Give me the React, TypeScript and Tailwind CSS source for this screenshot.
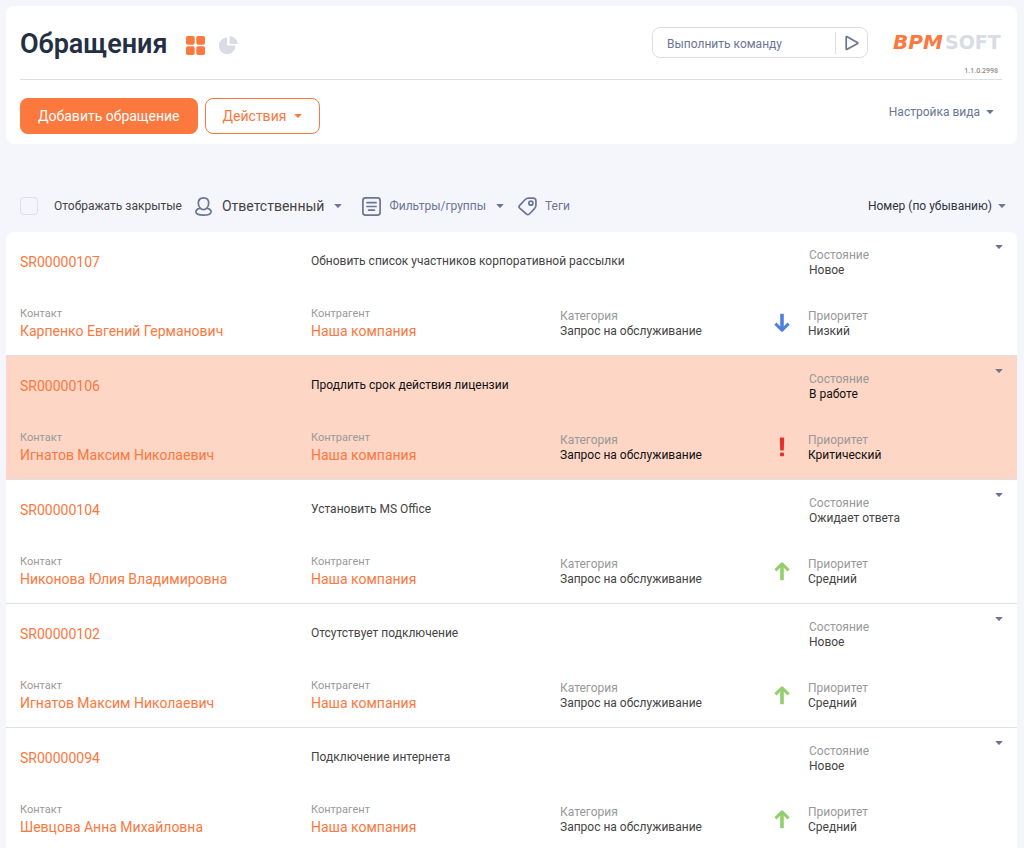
import clsx from "clsx";

type Priority = "low" | "medium" | "critical";

type Ticket = {
  id: string;
  subject: string;
  status: string;
  contact: string;
  priority: Priority;
  selected?: boolean;
};

const tickets: Ticket[] = [
  {
    id: "SR00000107",
    subject: "Обновить список участников корпоративной рассылки",
    status: "Новое",
    contact: "Карпенко Евгений Германович",
    priority: "low",
  },
  {
    id: "SR00000106",
    subject: "Продлить срок действия лицензии",
    status: "В работе",
    contact: "Игнатов Максим Николаевич",
    priority: "critical",
    selected: true,
  },
  {
    id: "SR00000104",
    subject: "Установить MS Office",
    status: "Ожидает ответа",
    contact: "Никонова Юлия Владимировна",
    priority: "medium",
  },
  {
    id: "SR00000102",
    subject: "Отсутствует подключение",
    status: "Новое",
    contact: "Игнатов Максим Николаевич",
    priority: "medium",
  },
  {
    id: "SR00000094",
    subject: "Подключение интернета",
    status: "Новое",
    contact: "Шевцова Анна Михайловна",
    priority: "medium",
  },
];

const priorityNames: Record<Priority, string> = {
  low: "Низкий",
  medium: "Средний",
  critical: "Критический",
};

function Caret() {
  return (
    <svg viewBox="0 0 8 4" className="h-1 w-2 shrink-0" fill="currentColor" aria-hidden="true">
      <path d="M0.8 0h6.4q.6 0 .2.5L4.6 3.6q-.6.6-1.2 0L.6.5Q.2 0 .8 0z" />
    </svg>
  );
}

function PriorityIcon({ priority }: { priority: Priority }) {
  if (priority === "critical") {
    return (
      <svg viewBox="0 0 16 20" className="h-5 w-4 shrink-0" fill="#e8302a" aria-hidden="true">
        <path d="M5.800 1.2q0-.7.7-.7h3q.7 0 .7.7L9.800 13q0 .6-.6.6H6.800q-.6 0-.6-.6z" />
        <rect x="6" y="15.4" width="4" height="3.8" rx="1" />
      </svg>
    );
  }
  return (
    <svg
      viewBox="0 0 16 20"
      className={clsx("h-5 w-4 shrink-0", priority === "low" ? "rotate-180 text-[#4f7fe0]" : "text-[#93cf6d]")}
      fill="none"
      stroke="currentColor"
      strokeWidth="3.6"
      aria-hidden="true"
    >
      <path d="M8 19.2V3" />
      <path d="M1.4 9.4L8 2.8l6.6 6.6" strokeWidth="3" strokeLinejoin="round" />
    </svg>
  );
}

function Logo() {
  return (
    <a href="#" aria-label="BPMSOFT" className="block">
      <svg viewBox="0 0 110 24" className="h-6 w-[110px] overflow-visible" fontFamily="'DejaVu Sans', sans-serif" fontSize="19" fontWeight="700">
        <text x="0" y="19" fill="#fb783e" fontStyle="italic" fontSize="20">
          BPM
        </text>
        <text x="52" y="19" fill="#d9dce4">
          SOFT
        </text>
      </svg>
    </a>
  );
}

function Header() {
  return (
    <header className="rounded-lg bg-white px-3.5 pb-2.5 pt-5">
      <div className="flex items-start">
        <h1 className="text-[27px] font-semibold leading-9 text-[#242f43]">Обращения</h1>
        <button type="button" aria-label="Реестр" className="ml-[18px] mt-2.5">
          <svg viewBox="0 0 19 19" className="size-[19px]" fill="#fb783e">
            <rect width="8.7" height="8.7" rx="1.8" />
            <rect x="10.3" width="8.7" height="8.7" rx="1.8" />
            <rect y="10.3" width="8.7" height="8.7" rx="1.8" />
            <rect x="10.3" y="10.3" width="8.7" height="8.7" rx="1.8" />
          </svg>
        </button>
        <button type="button" aria-label="Аналитика" className="ml-3.5 mt-2.5">
          <svg viewBox="0 0 19 19" className="size-[19px]" fill="#d9dce4">
            <path d="M8.2 1.6v8h8.2A8.3 8.3 0 1 1 8.2 1.6z" />
            <path d="M10.6 0A8.4 8.4 0 0 1 18.8 8H10.6z" />
          </svg>
        </button>

        <form className="ml-auto mt-px flex h-[31px] w-[216px] items-center rounded-lg border border-[#dcdfe8]">
          <input
            type="text"
            aria-label="Выполнить команду"
            placeholder="Выполнить команду"
            className="h-full min-w-0 flex-1 bg-transparent pl-3.5 pt-0.5 text-xs text-[#6b7594] outline-none placeholder:text-[#6b7594]"
          />
          <button
            type="submit"
            aria-label="Выполнить"
            className="flex h-[22px] w-8 items-center justify-center border-l border-[#dcdfe8]"
          >
            <svg viewBox="0 0 14 16" className="h-4 w-3.5" fill="none" stroke="#6b7594" strokeWidth="1.7" strokeLinejoin="round">
              <path d="M1.2 2.2v11.6q0 1 .9.5l10.2-5.5q1-.6 0-1.2L2.1 1.7q-.9-.5-.9.5z" />
            </svg>
          </button>
        </form>
        <div className="ml-[25px] mt-1">
          <Logo />
          <p className="mt-3 pr-[5px] text-right text-[7px] font-medium leading-[10px] text-[#8f8a88]">1.1.0.2998</p>
        </div>
      </div>

      <div className="mr-px mt-[3px] flex items-start border-t border-[#dcdfe8] pt-[18px]">
        <button type="button" className="h-9 rounded-lg bg-[#fb783e] px-[18px] text-sm text-white">
          Добавить обращение
        </button>
        <button
          type="button"
          className="ml-[7px] flex h-9 items-center gap-2 rounded-lg border border-[#fb783e] px-[17px] text-sm text-[#fb783e]"
        >
          Действия
          <Caret />
        </button>
        <button type="button" className="ml-auto mr-2 mt-1 flex items-center gap-1.5 text-xs leading-5 text-[#6b7594]">
          Настройка вида
          <Caret />
        </button>
      </div>
    </header>
  );
}

function Toolbar() {
  return (
    <div className="flex h-[52px] items-center px-3.5 text-xs text-[#6b7594]">
      <label className="flex items-center gap-4 text-[#444]">
        <input type="checkbox" className="size-[18px] appearance-none rounded border border-[#dcdfe8]" />
        Отображать закрытые
      </label>
      <button type="button" className="ml-[13px] flex items-center">
        <svg viewBox="0 0 17 19" className="mr-2.5 h-[19px] w-[17px]" fill="none" stroke="currentColor" strokeWidth="1.7">
          <path d="M5.2 11.1C3.9 9.9 3.3 8 3.3 6.1 3.3 3 5.3.9 8.5.9s5.2 2.1 5.2 5.2c0 1.9-.6 3.8-1.9 5 2.6.7 4.3 1.8 4.3 3.6 0 2.4-3.2 3.4-7.6 3.4S.9 17.1.9 14.7c0-1.8 1.7-2.9 4.3-3.6z" />
          <path d="M5.2 11.1c1.7 2 4.9 2 6.6 0" />
        </svg>
        <span className="mr-2.5 text-sm text-[#444]">Ответственный</span>
        <Caret />
      </button>
      <button type="button" className="ml-5 flex items-center">
        <svg viewBox="0 0 19 19" className="mr-2 size-[19px]" fill="none" stroke="currentColor" strokeWidth="1.7" strokeLinecap="round">
          <rect x=".9" y=".9" width="17.2" height="17.2" rx="2.5" />
          <path d="M5 5.7h9M5 9.5h9M6.6 13.2h5.8" />
        </svg>
        <span className="mr-2.5">Фильтры/группы</span>
        <Caret />
      </button>
      <button type="button" className="ml-3.5 flex items-center gap-2">
        <svg viewBox="0 0 19 19" className="size-[19px]" fill="none" stroke="currentColor" strokeWidth="1.7" strokeLinejoin="round">
          <path d="M7.2 2.5Q8.600 1.1 10.400 1.1h4.800q2.700 0 2.700 2.700v4.400q0 2-1.400 3.400l-5.100 5.400q-1.500 1.400-3 0L1.700 11.200q-1.400-1.400 0-2.900z" />
          <circle cx="12.9" cy="6.2" r="2" />
        </svg>
        Теги
      </button>
      <button type="button" className="ml-auto -mr-1.5 flex items-center gap-1.5 pr-[3px] text-[#2e3440]">
        Номер (по убыванию)
        <span className="text-[#6b7594]">
          <Caret />
        </span>
      </button>
    </div>
  );
}

function Field({ label, value }: { label: string; value: string }) {
  return (
    <div className="text-xs leading-[15px]">
      <p className="text-[#999]">{label}</p>
      <p>{value}</p>
    </div>
  );
}

function LinkField({ label, value }: { label: string; value: string }) {
  return (
    <div>
      <p className="text-[11px] leading-4 text-[#999]">{label}</p>
      <a href="#" className="block text-sm leading-[18px] text-[#fb783e]">
        {value}
      </a>
    </div>
  );
}

function TicketRow({ ticket }: { ticket: Ticket }) {
  return (
    <li
      className={clsx(
        "grid grid-cols-[291fr_249fr_214fr_243fr] border-b border-[#dfe1e5] pb-[15px] pl-3.5 pt-4",
        ticket.selected ? "bg-[#fdd6c6] text-[#111]" : "bg-white text-[#444]"
      )}
    >
      <a href="#" className="pt-1 text-sm leading-5 text-[#fb783e]">
        {ticket.id}
      </a>
      <p className="col-span-2 pt-[3px] text-xs leading-5">{ticket.subject}</p>
      <div className="flex items-start justify-between pl-[35px] pr-3.5">
        <Field label="Состояние" value={ticket.status} />
        <button type="button" aria-label="Действия с обращением" className="-mt-[3px] text-[#6b7594]">
          <Caret />
        </button>
      </div>

      <div className="pt-7">
        <LinkField label="Контакт" value={ticket.contact} />
      </div>
      <div className="pt-7">
        <LinkField label="Контрагент" value="Наша компания" />
      </div>
      <div className="pt-[31px]">
        <Field label="Категория" value="Запрос на обслуживание" />
      </div>
      <div className="flex items-start gap-[18px] pt-[31px]">
        <div className="pt-1">
          <PriorityIcon priority={ticket.priority} />
        </div>
        <Field label="Приоритет" value={priorityNames[ticket.priority]} />
      </div>
    </li>
  );
}

export default function App() {
  return (
    <div className="h-screen overflow-hidden bg-[#f5f6fb] pl-1.5 pr-[7px] pt-1.5 font-['Roboto','Noto_Sans',sans-serif]">
      <Header />
      <main className="pt-9">
        <Toolbar />
        <ul className="overflow-hidden rounded-t-lg">
          {tickets.map((ticket) => (
            <TicketRow key={ticket.id} ticket={ticket} />
          ))}
        </ul>
      </main>
    </div>
  );
}
